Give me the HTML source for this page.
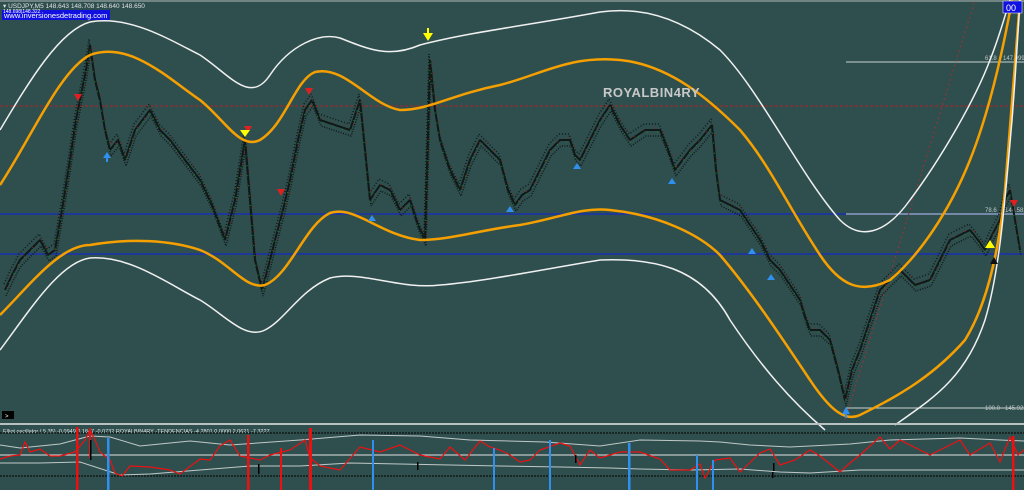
<!DOCTYPE html>
<html><head><meta charset="utf-8"><style>
html,body{margin:0;padding:0;background:#2f4f4f;overflow:hidden}
svg{display:block}
text{font-family:"Liberation Sans",sans-serif}
</style></head><body>
<svg width="1024" height="490" viewBox="0 0 1024 490" xmlns="http://www.w3.org/2000/svg">
<defs>
<polyline id="pr" fill="none" stroke-linejoin="bevel" points="5,290 12,275 20,260 30,250 40,240 48,255 55,250 62,210 70,160 76,120 80,100 86,70 90,45 95,80 100,100 105,130 110,150 118,140 125,160 135,130 150,110 160,130 170,140 185,160 200,180 212,205 225,240 235,200 245,140 250,200 255,260 262,290 270,260 275,240 283,210 290,180 298,140 305,110 312,100 320,120 335,125 350,130 360,100 365,150 370,200 380,185 390,190 400,210 410,200 418,225 425,240 430,60 435,110 440,140 450,170 460,190 470,160 480,140 490,150 500,160 508,190 515,205 522,195 530,190 540,170 550,150 560,140 570,140 575,155 580,160 590,140 600,120 610,105 620,125 630,140 645,130 660,130 668,150 675,170 690,150 700,140 712,125 716,170 720,200 730,205 740,210 750,225 760,240 770,260 780,270 790,285 800,300 806,320 810,330 820,330 830,340 838,370 845,400 852,370 860,350 870,320 880,290 890,280 900,270 915,285 930,280 940,260 950,240 960,235 970,230 978,240 985,250 992,235 1000,220 1005,200 1010,190 1015,220 1020,250"/>
</defs>
<rect width="1024" height="490" fill="#2f4f4f"/>
<line x1="0" y1="1" x2="1024" y2="1" stroke="#b0b8b8" stroke-width="1"/>
<line x1="0" y1="106" x2="1024" y2="106" stroke="#b02020" stroke-width="1" stroke-dasharray="3,2"/>
<line x1="0" y1="214" x2="1024" y2="214" stroke="#1830b0" stroke-width="1.5"/>
<line x1="0" y1="254" x2="1024" y2="254" stroke="#1830b0" stroke-width="1.5"/>
<line x1="846" y1="62" x2="1024" y2="62" stroke="#c8d0d0" stroke-width="1"/>
<line x1="846" y1="214" x2="1024" y2="214" stroke="#c8d0d0" stroke-width="1"/>
<line x1="846" y1="408" x2="1024" y2="408" stroke="#c8d0d0" stroke-width="1"/>
<line x1="845" y1="420" x2="975" y2="0" stroke="#a03030" stroke-width="1" stroke-dasharray="2,3"/>
<text x="985" y="60" font-size="6" fill="#c0c8c8">61.8</text><text x="1003" y="60" font-size="6" fill="#c0c8c8">147.099</text>
<text x="985" y="212" font-size="6" fill="#c0c8c8">78.6</text><text x="1005" y="212" font-size="6" fill="#c0c8c8">146.582</text>
<text x="985" y="410" font-size="6" fill="#c0c8c8">100.0</text><text x="1005" y="410" font-size="6" fill="#c0c8c8">145.922</text>
<!-- price -->
<use href="#pr" stroke="#101818" stroke-width="1.5" stroke-dasharray="1,1.5" transform="translate(1,6)"/>
<use href="#pr" stroke="#101818" stroke-width="1.5" stroke-dasharray="1,2" transform="translate(-1,-6)"/>
<use href="#pr" stroke="#101818" stroke-width="2"/>
<use href="#pr" stroke="#1a8a1a" stroke-width="1" stroke-dasharray="1,9" transform="translate(0,2)"/>
<use href="#pr" stroke="#a01818" stroke-width="1" stroke-dasharray="1,11" transform="translate(2,-2)"/>
<!-- bands -->
<path fill="none" stroke="#f0f0f0" stroke-width="1.5" d="M0,130 C30,80 60,30 90,22 C130,15 170,40 200,55 C230,75 250,105 270,75 C290,45 320,32 340,38 C370,50 390,58 420,45 C470,32 530,25 600,12 C650,5 690,25 720,50 C760,90 800,175 840,220 C860,240 885,235 910,200 C940,160 975,100 990,60 C1000,35 1005,15 1010,0"/>
<path fill="none" stroke="#f5a000" stroke-width="2.5" d="M0,185 C30,140 60,70 90,55 C130,40 170,80 200,100 C225,120 240,150 260,140 C285,125 295,80 315,72 C345,65 370,105 400,110 C430,110 450,95 500,85 C540,75 570,55 620,60 C670,65 710,100 740,130 C770,165 790,210 820,255 C840,285 860,295 890,280 C920,255 950,210 970,160 C990,110 1003,50 1012,0"/>
<path fill="none" stroke="#f5a000" stroke-width="2.5" d="M0,315 C30,285 60,245 90,245 C130,238 170,240 200,250 C230,262 245,290 265,285 C290,275 305,225 330,213 C355,205 380,235 420,240 C450,240 480,230 520,225 C560,218 580,207 610,210 C660,215 700,235 720,255 C750,290 780,335 810,380 C830,410 845,422 860,415 C890,400 930,380 965,340 C990,300 1000,240 1005,190 C1010,120 1015,60 1020,0"/>
<path fill="none" stroke="#f0f0f0" stroke-width="1.5" d="M0,350 C30,310 60,262 90,258 C130,255 170,285 200,300 C225,315 245,340 265,330 C285,320 300,290 330,278 C360,270 400,290 440,285 C480,282 540,270 600,260 C650,258 700,265 730,320 C760,365 790,400 825,430"/>
<path fill="none" stroke="#f0f0f0" stroke-width="1.5" d="M895,425 C930,400 965,380 985,320 C1000,270 1005,200 1012,120 C1016,70 1018,30 1020,0"/>
<!-- arrows -->
<g fill="#e02020">
<polygon points="74,94 82,94 78,101"/><polygon points="305,88 313,88 309,95"/><polygon points="244,126 252,126 248,133"/><polygon points="277,189 285,189 281,196"/><polygon points="1010,200 1018,200 1014,207"/>
</g>
<g fill="#3090f0">
<polygon points="103,158 111,158 107,152"/><polygon points="368,221 376,221 372,215"/><polygon points="506,212 514,212 510,206"/><polygon points="573,169 581,169 577,163"/><polygon points="668,184 676,184 672,178"/><polygon points="748,254 756,254 752,248"/><polygon points="767,280 775,280 771,274"/><polygon points="842,414 850,414 846,407"/>
</g>
<rect x="106" y="158" width="2" height="4" fill="#3090f0"/><rect x="845" y="414" width="2" height="4" fill="#3090f0"/>
<g fill="#ffff00"><polygon points="423,33 433,33 428,41"/><rect x="427" y="28" width="2" height="6"/><polygon points="240,130 250,130 245,137"/><polygon points="985,248 995,248 990,240"/></g>
<polygon points="990,264 998,264 994,257" fill="#101010"/>
<!-- header -->
<text x="3" y="8" font-size="6.5" fill="#e0e0e0">▾ USDJPY,M5  148.643 148.708 148.640 148.650</text>
<rect x="2" y="10" width="108" height="10" fill="#1010e0"/>
<text x="4" y="18" font-size="7.5" fill="#ffffff">www.inversionesdetrading.com</text>
<text x="3" y="13" font-size="5" fill="#ffffff">148.698|148.322</text>
<rect x="1003" y="1" width="19" height="12" fill="#1010e0" stroke="#fff" stroke-width="0.5"/>
<text x="1006" y="11" font-size="9" fill="#ffffff">00</text>
<text x="603" y="97" font-size="13" font-weight="bold" fill="#c8c8c8" letter-spacing="0.5">ROYALBIN4RY</text>
<rect x="2" y="411" width="12" height="8" fill="#000"/><text x="5" y="418" font-size="6" fill="#fff">&gt;</text>
<!-- panel -->
<line x1="0" y1="424" x2="1024" y2="424" stroke="#b8c0c0" stroke-width="2"/>
<text x="3" y="433" font-size="5.5" fill="#e0e0e0">Elliot oscillator ( 5,35) -0.0949 0.1847 -0.0732  ROYALBIN4RY -TENDENCIAS -4.2801 0.0000 2.0621 -7.3227</text>
<line x1="0" y1="433" x2="1024" y2="433" stroke="#101818" stroke-width="1.5" stroke-dasharray="2,1"/>
<line x1="0" y1="476" x2="1024" y2="476" stroke="#101818" stroke-width="1.5" stroke-dasharray="2,1"/>
<line x1="0" y1="455" x2="1024" y2="455" stroke="#e0e0e0" stroke-width="1"/>
<polyline fill="none" stroke="#c0c8c8" stroke-width="1" points="0,445 20,448 60,444 90,436 110,437 140,446 190,441 230,445 300,440 360,435 420,436 470,440 545,442 600,446 640,440 700,441 720,442 750,445 790,447 850,444 890,440 960,438 1000,440 1024,441"/>
<polyline fill="none" stroke="#c0c8c8" stroke-width="1" points="0,463 40,463 80,462 120,475 150,474 200,470 250,466 300,466 350,463 400,464 500,466 560,467 610,468 640,469 690,470 740,469 780,472 810,473 860,470 900,470 960,470 1000,470 1024,470"/>
<polyline fill="none" stroke="#ee1010" stroke-width="1.2" points="0,459 10,456 20,455 25,442 30,452 40,449 50,456 60,456 75,452 85,440 90,430 95,440 100,452 110,460 115,473 122,476 130,466 150,467 170,470 180,474 200,459 210,460 220,446 230,440 240,456 260,460 270,455 290,450 305,440 310,458 320,466 330,468 340,470 360,447 380,452 400,445 420,455 440,459 450,447 465,460 480,441 490,447 500,450 510,455 520,462 530,460 540,450 560,443 570,446 580,465 590,450 600,458 610,455 620,452 640,452 660,459 670,470 690,470 700,464 705,478 715,460 730,458 740,472 760,453 770,449 780,465 795,460 810,450 820,456 840,472 850,463 860,455 880,437 890,449 900,440 930,455 960,440 970,455 990,443 1000,462 1010,437 1018,455 1024,450"/>
<g fill="#ee1010"><rect x="76" y="427" width="2.5" height="63"/><rect x="89" y="428" width="2" height="30"/><rect x="247" y="435" width="2.5" height="55"/><rect x="280" y="448" width="2" height="42"/><rect x="309" y="428" width="3" height="62"/><rect x="1012" y="436" width="2.5" height="54"/></g>
<g fill="#3090f0"><rect x="107" y="438" width="2.5" height="52"/><rect x="372" y="440" width="2" height="50"/><rect x="493" y="448" width="2" height="42"/><rect x="549" y="440" width="2" height="50"/><rect x="628" y="443" width="2.5" height="47"/><rect x="696" y="455" width="2" height="35"/><rect x="712" y="460" width="2" height="30"/></g>
<g fill="#000"><rect x="90" y="440" width="1.5" height="20"/><rect x="258" y="464" width="1.5" height="10"/><rect x="417" y="462" width="1.5" height="8"/><rect x="575" y="455" width="1.5" height="8"/><rect x="773" y="463" width="1.5" height="8"/><rect x="772" y="472" width="1.5" height="6"/></g>
</svg>
</body></html>
